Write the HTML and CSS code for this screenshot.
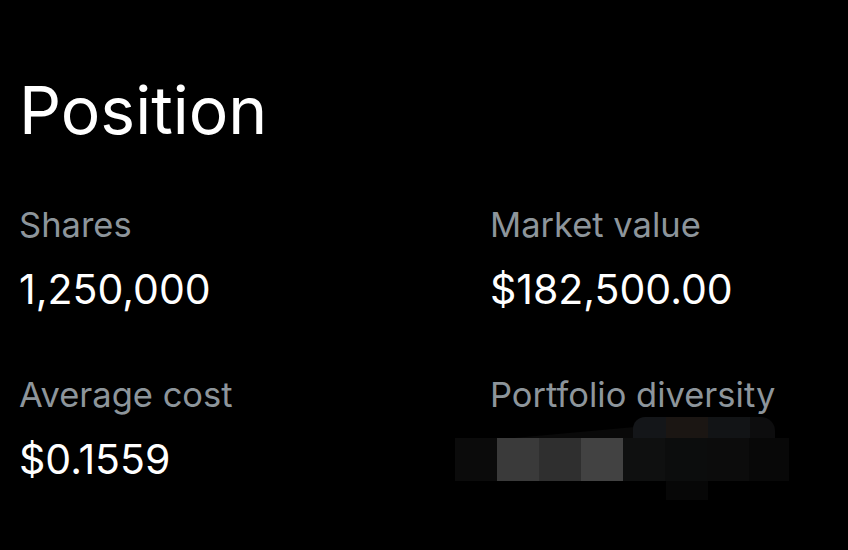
FILE: index.html
```html
<!DOCTYPE html>
<html>
<head>
<meta charset="utf-8">
<link rel="stylesheet" href="styles.css">
</head>
<body>
<div class="page">
  <h1 class="title">Position</h1>
  <div class="grid">
    <div class="cell">
      <div class="label">Shares</div>
      <div class="value">1,250,000</div>
    </div>
    <div class="cell">
      <div class="label">Market value</div>
      <div class="value">$182,500.00</div>
    </div>
    <div class="cell">
      <div class="label">Average cost</div>
      <div class="value">$0.1559</div>
    </div>
    <div class="cell">
      <div class="label">Portfolio diversity</div>
      <div class="mosaic">
        <div class="slope"></div>
        <div class="toprow">
          <span class="t0"></span>
          <span class="t1"></span>
          <span class="t2"></span>
          <span class="t3"></span>
        </div>
        <div class="blocks">
          <span class="blk b0"></span>
          <span class="blk b1"></span>
          <span class="blk b2"></span>
          <span class="blk b3"></span>
          <span class="blk b4"></span>
          <span class="blk b5"></span>
          <span class="blk b6"></span>
          <span class="blk b7"></span>
        </div>
        <div class="bottom"></div>
      </div>
    </div>
  </div>
</div>
</body>
</html>
```

FILE: styles.css
```css
html, body {
  margin: 0;
  padding: 0;
  background: #000;
}
body {
  width: 848px;
  height: 550px;
  overflow: hidden;
  font-family: "Inter", "Liberation Sans", sans-serif;
  color: #fff;
}
.page {
  padding: 70px 0 0 19px;
}
.title {
  margin: 0;
  font-size: 66px;
  font-weight: 400;
  line-height: 80px;
}
.grid {
  display: grid;
  grid-template-columns: 471px 1fr;
  row-gap: 63px;
  margin-top: 55px;
}
.label {
  font-size: 34.5px;
  line-height: 40px;
  color: #8d959b;
}
.value {
  margin-top: 21px;
  font-size: 41px;
  line-height: 46px;
  color: #fff;
}
.mosaic {
  position: relative;
  margin: 2px 0 0 -35px;
  width: 335px;
  height: 83px;
}
.slope {
  position: absolute;
  left: 0;
  top: 10px;
  width: 180px;
  height: 54px;
  background: #090909;
  clip-path: polygon(0 30%, 100% 0, 100% 100%, 0 100%);
}
.toprow {
  position: relative;
  display: flex;
  margin-left: 178px;
  width: 142px;
  height: 21px;
  border-radius: 12px 14px 0 0;
  overflow: hidden;
}
.toprow span { height: 21px; }
.t0 { width: 33px; background: #141619; }
.t1 { width: 42px; background: #1b1613; }
.t2 { width: 42px; background: #121416; }
.t3 { width: 25px; background: #0d0d0e; }
.blocks {
  position: relative;
  display: flex;
  height: 43px;
}
.blk {
  width: 42px;
  height: 43px;
}
.b0 { background: #0b0b0b; }
.b1 { background: #3a3a3a; }
.b2 { background: #2f2f2f; }
.b3 { background: #424242; }
.b4 { background: #0f1010; }
.b5 { background: #0c0d0d; }
.b6 { background: #0c0c0c; }
.b7 { background: #080808; width: 40px; }
.bottom {
  margin-left: 211px;
  width: 42px;
  height: 19px;
  background: #070707;
}
```
